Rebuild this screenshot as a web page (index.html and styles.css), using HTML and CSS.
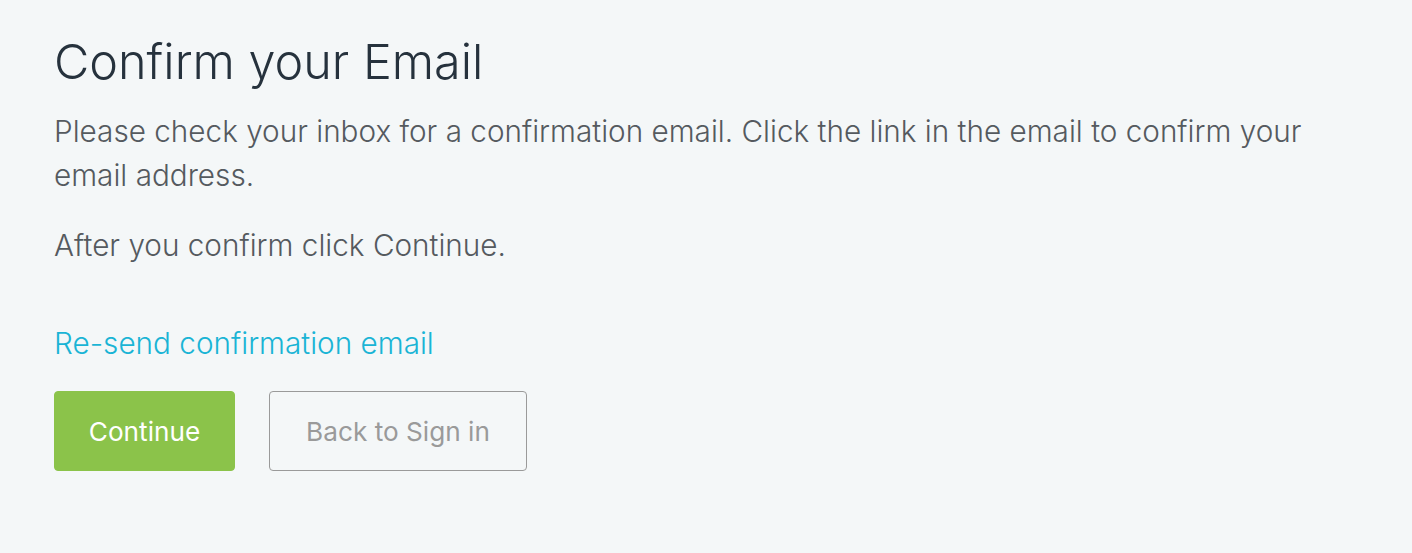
FILE: index.html
```html
<!DOCTYPE html>
<html lang="en">
<head>
<meta charset="utf-8">
<title>Confirm your Email</title>
<link rel="stylesheet" href="styles.css">
</head>
<body>
<main class="page">
  <h1 class="title">Confirm your Email</h1>
  <p class="text">Please check your inbox for a confirmation email. Click the link in the email to confirm your email address.</p>
  <p class="text">After you confirm click Continue.</p>
  <a class="resend" href="#">Re-send confirmation email</a>
  <div class="actions">
    <button class="btn btn-primary" type="button">Continue</button>
    <button class="btn btn-outline" type="button">Back to Sign in</button>
  </div>
</main>
</body>
</html>
```

FILE: styles.css
```css
html, body {
  margin: 0;
  padding: 0;
  background: #f4f7f8;
}
body {
  font-family: Inter, "Noto Sans", sans-serif;
  width: 1412px;
  height: 553px;
  overflow: hidden;
}
.page {
  padding: 30px 54px 0 54px;
  display: flex;
  flex-direction: column;
  align-items: flex-start;
}
.title {
  margin: 0;
  font-size: 48.5px;
  font-weight: 300;
  line-height: 64px;
  color: #26323d;
}
.text {
  margin: 15px 0 0 0;
  font-size: 29.7px;
  font-weight: 300;
  line-height: 44px;
  color: #555a5f;
  width: 1300px;
}
.text + .text {
  margin-top: 26px;
}
.resend {
  margin-top: 54px;
  font-size: 29.7px;
  font-weight: 300;
  line-height: 44px;
  color: #1ab4d5;
  text-decoration: none;
}
.actions {
  display: flex;
  gap: 34px;
  margin-top: 26px;
}
.btn {
  font-family: Inter, "Noto Sans", sans-serif;
  font-size: 26.2px;
  height: 80px;
  border-radius: 4px;
  padding: 0;
  cursor: pointer;
}
.btn-primary {
  background: #8bc34a;
  border: 1px solid #8bc34a;
  color: #fff;
  font-weight: 400;
  width: 181px;
}
.btn-outline {
  background: transparent;
  border: 1px solid #9a9a9a;
  color: #9a9a9a;
  font-weight: 400;
  width: 258px;
}
```
